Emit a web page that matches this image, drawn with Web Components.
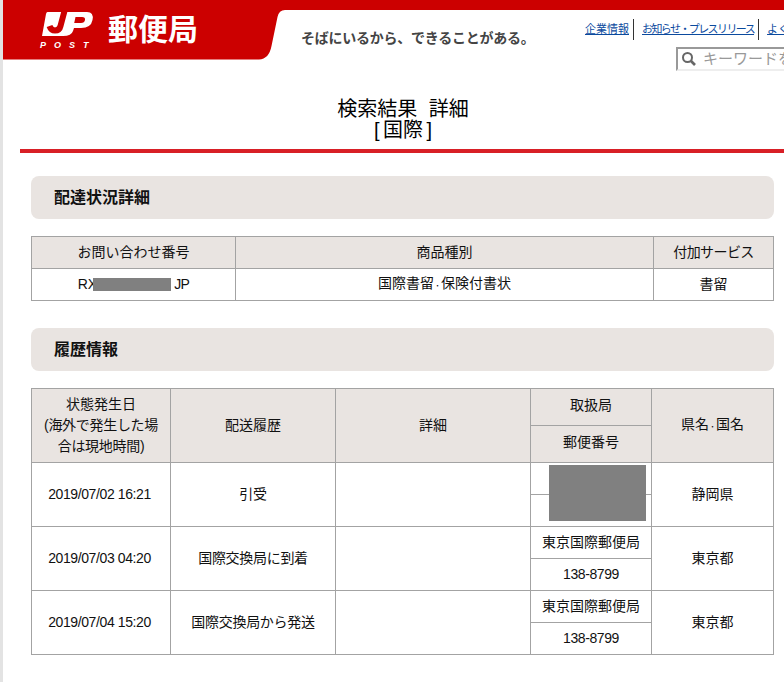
<!DOCTYPE html>
<html lang="ja"><head><meta charset="utf-8"><title>検索結果 詳細</title>
<style>
html,body{margin:0;padding:0;background:#fff;width:784px;height:682px;overflow:hidden}
body{font-family:"Liberation Sans","Noto Sans CJK JP",sans-serif;color:#111}
</style></head><body>
<jp-page>
  <jp-header></jp-header>
  <jp-title><span style="word-spacing:6px">検索結果 詳細</span><br><span style="letter-spacing:3.500px">[</span>国際<span style="margin-left:3.500px">]</span></jp-title>
  <jp-section-head>配達状況詳細</jp-section-head>
  <jp-summary></jp-summary>
  <jp-section-head>履歴情報</jp-section-head>
  <jp-history></jp-history>
</jp-page>
<script>
const FONT='"Liberation Sans","Noto Sans CJK JP",sans-serif';
function def(name,html,init){
  customElements.define(name,class extends HTMLElement{
    constructor(){super();this.attachShadow({mode:'open'}).innerHTML=html;}
    connectedCallback(){if(init)init(this.shadowRoot,this);}
  });
}
const tableCss=`
table{border-collapse:collapse;table-layout:fixed;font:14px/21px ${FONT};color:#111;text-align:center}
th,td{border:1px solid #a3a3a3;padding:0;font-weight:400;box-sizing:border-box}
th{background:#e9e4e1}
.n{letter-spacing:-.4px}
.d{font-size:7px}
.t{letter-spacing:-.3px}
.date{padding-right:3px}
`;
def('jp-page',`<style>:host{display:block;width:781px;height:682px;border-left:3px solid #e3e3e3;overflow:hidden}</style><slot></slot>`);
def('jp-header',`<style>
:host{display:flex;height:60px;width:781px}
svg{flex:none;display:block}
.right{flex:1;min-width:0;display:flex;border-top:10px solid #cc0000;height:50px;white-space:nowrap;overflow:visible}
.tag{flex:none;width:228px;margin:18px 0 0 8px;font:700 14px/20px ${FONT};letter-spacing:-.25px;color:#444}
.util{flex:none;margin-left:56px;display:flex;flex-direction:column}
nav{flex:none;display:flex;height:21px;margin-top:9px;font:11px/20px ${FONT}}
nav a{color:#0b4a9e;text-decoration:underline;margin-right:4px}
nav i{flex:none;width:1px;height:21px;background:#333;margin-right:8px}
nav a.k{letter-spacing:-1.6px}
.search{flex:none;display:flex;align-items:center;gap:6px;margin-left:91px;margin-top:7px;height:24px;width:200px;box-sizing:border-box;border-top:2px solid #999;border-left:2px solid #999;border-bottom:2px solid #eee;padding-left:3px;font:15px/20px ${FONT};color:#999}
.search svg{flex:none}
</style>
<svg width="290" height="60" viewBox="3 0 290 60" aria-label="JP POST 郵便局">
<path fill="#cc0000" d="M3 0H293V10H285Q279 10 277.500 17L271.500 46Q269 59 259 59.500H3Z"/>
<path fill="#fff" d="M47.500 12H87Q94 12 92.500 20Q91 28 81 28H74L73 31Q71.500 36 63 36H42L46 14Q46.500 12 47.500 12Z"/>
<path fill="none" stroke="#cc0000" stroke-width="6" d="M64.500 11L60.500 26Q59.500 30.500 55 30.500Q51 30.500 49.500 26"/>
<path fill="#cc0000" d="M75.500 17L74.200 23H81Q84.500 23 85 20Q85.500 17 82 17Z"/>
<g fill="#fff">
<text x="40" y="47.500" font-family="Liberation Sans" font-weight="700" font-style="italic" font-size="9" letter-spacing="8">POST</text>
<text x="108" y="40" font-family="Noto Sans CJK JP" font-weight="700" font-size="30">郵便局</text>
</g></svg>
<div class="right">
<div class="tag">そばにいるから、できることがある。</div>
<div class="util">
<nav><a>企業情報</a><i></i><a class="k">お知らせ・プレスリリース</a><i></i><a>よくあるご質問</a></nav>
<div class="search"><svg width="16" height="16" viewBox="0 0 16 16"><circle cx="6.500" cy="6.500" r="4.500" fill="none" stroke="#666" stroke-width="2"/><path d="M10 10l4 4" stroke="#666" stroke-width="2.600"/></svg><span>キーワードを入力</span></div>
</div></div>`);
def('jp-title',`<style>
:host{display:block;margin:0 0 23px 17px;padding:39px 0 8px;font:400 20px/21px ${FONT};color:#000;text-align:center;width:764px;box-sizing:border-box;position:relative;border-bottom:4px solid;border-image:linear-gradient(#f0393f,#d81f26) 1}
div{margin-left:-17px;padding-left:17px;transform:translateX(1px)}
</style><div><slot></slot></div>`);
def('jp-section-head',`<style>
:host{display:block;width:743px;height:43px;margin-left:28px;box-sizing:border-box;padding:1px 23px 0;background:#e9e4e1;border-radius:8px;font:700 16px/42px ${FONT};color:#111}
</style><slot></slot>`);
def('jp-summary',`<style>${tableCss}
:host{display:block;margin:17px 0 27px 28px}
table{width:742px}
th,td{height:32px}
.r{display:inline-block;width:78px;height:13px;background:#808080;vertical-align:-2px;margin:0 3px 0 -4px}
.j{letter-spacing:-.6px}
</style><table>
<colgroup><col style="width:204px"><col style="width:418px"><col style="width:120px"></colgroup>
<tr><th>お問い合わせ番号</th><th>商品種別</th><th class="j">付加サービス</th></tr>
<tr><td>RX<span class="r"></span><span class="j">JP</span></td><td>国際書留<span class="d">・</span>保険付書状</td><td>書留</td></tr>
</table>`);
const rows=[
 ['2019/07/02 16:21','引受','','','','静岡県',true],
 ['2019/07/03 04:20','国際交換局に到着','','東京国際郵便局','138-8799','東京都'],
 ['2019/07/04 15:20','国際交換局から発送','','東京国際郵便局','138-8799','東京都']
];
def('jp-history',`<style>${tableCss}
:host{display:block;margin:17px 0 0 28px}
table{width:742px}
.h th{height:37px}
.h th.up{padding-bottom:3px}
.b td{height:32px}
.o{position:relative}
.r{position:absolute;left:18px;top:2px;width:97px;height:56px;background:#808080}
</style><table>
<colgroup><col style="width:139px"><col style="width:165px"><col style="width:195px"><col style="width:121px"><col style="width:122px"></colgroup>
<tbody id="b"><tr class="h"><th rowspan="2">状態発生日<br><span class="t">(海外で発生した場<br>合は現地時間)</span></th><th rowspan="2">配送履歴</th><th rowspan="2">詳細</th><th class="up">取扱局</th><th rowspan="2">県名<span class="d">・</span>国名</th></tr>
<tr class="h"><th class="up">郵便番号</th></tr></tbody></table>`,(s)=>{
  const b=s.getElementById('b');
  if(b.children.length>2)return;
  for(const r of rows){
    b.insertAdjacentHTML('beforeend',`<tr class="b"><td rowspan="2" class="n date">${r[0]}</td><td rowspan="2" class="t">${r[1]}</td><td rowspan="2">${r[2]}</td><td class="o">${r[3]}${r[6]?'<span class="r"></span>':''}</td><td rowspan="2">${r[5]}</td></tr><tr class="b"><td class="n">${r[4]}</td></tr>`);
  }
});
</script>
</body></html>
